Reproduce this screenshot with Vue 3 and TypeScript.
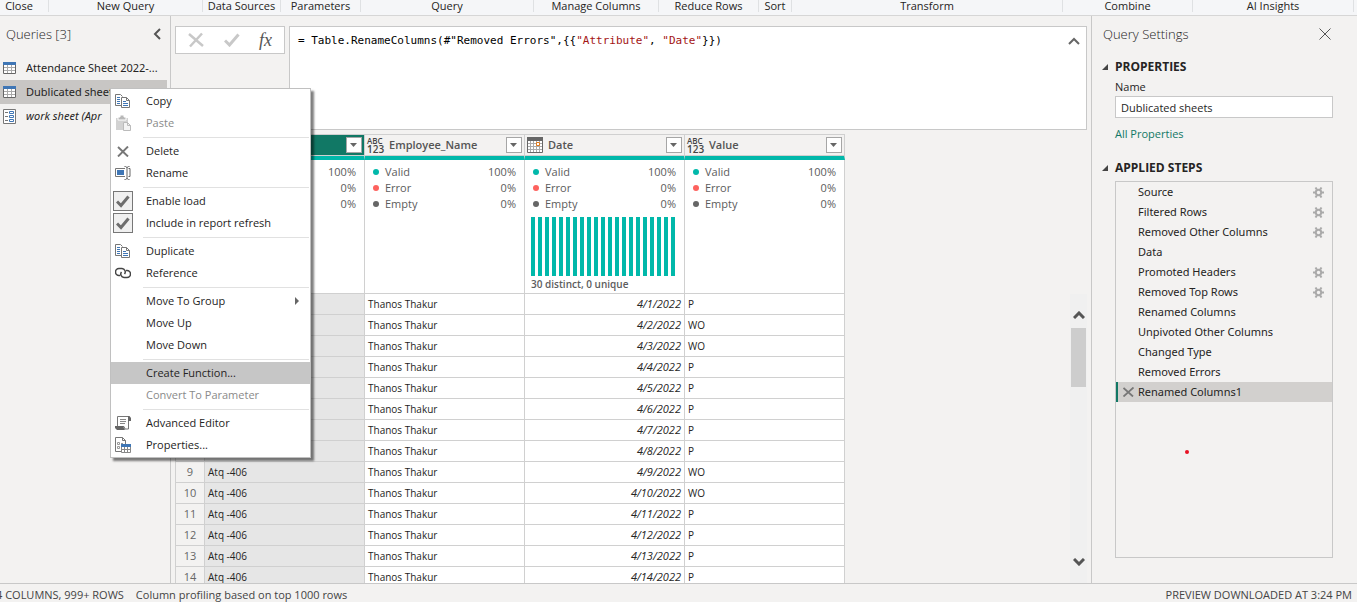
<script setup lang="ts">
import { ref } from 'vue'

interface MenuItem {
  label: string
  icon?: string
  disabled?: boolean
  active?: boolean
  submenu?: boolean
  check?: boolean
}

const ribbon = [
  'Close', 'New Query', 'Data Sources', 'Parameters', 'Query', 'Manage Columns',
  'Reduce Rows', 'Sort', 'Transform', 'Combine', 'AI Insights', '',
]

const queries = [
  { name: 'Attendance Sheet 2022-...', kind: 'table' },
  { name: 'Dublicated sheets', kind: 'table', selected: true },
  { name: 'work sheet (Apr', kind: 'list', italic: true },
]

const menu: MenuItem[][] = [
  [{ label: 'Copy', icon: 'copy' }, { label: 'Paste', icon: 'paste', disabled: true }],
  [{ label: 'Delete', icon: 'delete' }, { label: 'Rename', icon: 'rename' }],
  [{ label: 'Enable load', check: true }, { label: 'Include in report refresh', check: true }],
  [{ label: 'Duplicate', icon: 'copy' }, { label: 'Reference', icon: 'link' }],
  [{ label: 'Move To Group', submenu: true }, { label: 'Move Up' }, { label: 'Move Down' }],
  [{ label: 'Create Function...', active: true }, { label: 'Convert To Parameter', disabled: true }],
  [{ label: 'Advanced Editor', icon: 'script' }, { label: 'Properties...', icon: 'props' }],
]

const columns = [
  { name: 'Attribute', type: 'any', selected: true },
  { name: 'Employee_Name', type: 'any' },
  { name: 'Date', type: 'date', bars: 21 },
  { name: 'Value', type: 'any' },
]

const stats = [
  { name: 'Valid', value: '100%', tone: 'valid' },
  { name: 'Error', value: '0%', tone: 'error' },
  { name: 'Empty', value: '0%', tone: 'empty' },
]

const values = ['P', 'WO', 'WO', 'P', 'P', 'P', 'P', 'P', 'WO', 'WO', 'P', 'P', 'P', 'P']
const rows = values.map((value, i) => ({
  n: i + 1,
  id: 'Atq -406',
  employee: 'Thanos Thakur',
  date: `4/${i + 1}/2022`,
  value,
}))

const steps = [
  { name: 'Source', gear: true },
  { name: 'Filtered Rows', gear: true },
  { name: 'Removed Other Columns', gear: true },
  { name: 'Data' },
  { name: 'Promoted Headers', gear: true },
  { name: 'Removed Top Rows', gear: true },
  { name: 'Renamed Columns' },
  { name: 'Unpivoted Other Columns' },
  { name: 'Changed Type' },
  { name: 'Removed Errors' },
  { name: 'Renamed Columns1', selected: true },
]

const queryName = ref('Dublicated sheets')
</script>

<template>
  <div class="app">
    <header class="ribbon">
      <div v-for="(g, i) in ribbon" :key="i" class="group">{{ g }}</div>
    </header>

    <div class="body">
      <aside class="queries">
        <div class="pane-head">
          <h2>Queries [3]</h2>
          <button class="bare" aria-label="Collapse queries">
            <svg width="8" height="12" viewBox="0 0 8 12"><path d="M7 1 2 6l5 5" fill="none" stroke="#555" stroke-width="2" /></svg>
          </button>
        </div>
        <ul class="query-list">
          <li v-for="q in queries" :key="q.name">
            <button class="query" :class="{ selected: q.selected, italic: q.italic }">
              <svg v-if="q.kind === 'table'" width="13" height="12" viewBox="0 0 13 12">
                <path fill="#fff" d="M0 0h13v12H0z" />
                <path fill="#3f76b5" d="M0 0h13v3H0z" />
                <path d="M4.500 3v8M8.500 3v8M1 5.500h11M1 8.500h11" fill="none" stroke="#aaa" />
                <path d="M.5 3v8.500h12V3" fill="none" stroke="#666" />
              </svg>
              <svg v-else width="13" height="15" viewBox="0 0 13 15">
                <path d="M.5.5h12v14H.5z" fill="#fff" stroke="#777" />
                <path d="M2 3.500h3M2 7.500h3M2 11.500h3" stroke="#777" />
                <path d="M6.500 2.500h4v2h-4zM6.500 6.500h4v2h-4zM6.500 10.500h4v2h-4z" fill="none" stroke="#3f76b5" />
              </svg>
              <span>{{ q.name }}</span>
            </button>
          </li>
        </ul>
      </aside>

      <main class="center">
        <div class="formula-row">
          <div class="formula-tools">
            <button class="bare" aria-label="Cancel">
              <svg width="16" height="16" viewBox="0 0 16 16"><path d="M1 2 15 14M14 1.500 2 14.500" fill="none" stroke="#c8c8c8" stroke-width="2.500" /></svg>
            </button>
            <button class="bare" aria-label="Accept">
              <svg width="16" height="14" viewBox="0 0 16 14"><path d="M1 7.500 5.500 12 14.500 1.500" fill="none" stroke="#c8c8c8" stroke-width="3" /></svg>
            </button>
            <button class="bare fx" aria-label="Add step">fx</button>
          </div>
          <div class="formula">
            <code>= Table.RenameColumns(#"Removed Errors",{{ '{' }}{{ '{' }}<i>"Attribute"</i>, <i>"Date"</i>}})</code>
            <button class="bare" aria-label="Collapse formula bar">
              <svg width="12" height="8" viewBox="0 0 12 8"><path d="M1 7 6 2l5 5" fill="none" stroke="#666" stroke-width="2" /></svg>
            </button>
          </div>
        </div>

        <div class="grid-area">
          <div class="grid-clip">
            <table>
              <colgroup><col class="c-num" /><col v-for="c in columns" :key="c.name" /></colgroup>
              <thead>
                <tr class="names">
                  <th></th>
                  <th v-for="c in columns" :key="c.name" :class="{ picked: c.selected }">
                    <div class="th">
                      <span v-if="c.type === 'any'" class="any"><b>ABC</b><b class="digits">123</b></span>
                      <svg v-else width="16" height="16" viewBox="0 0 16 16">
                        <path fill="#fff" d="M0 0h16v16H0z" />
                        <path d="M3.500 4v11M6.500 4v11M9.500 4v11M12.500 4v11M1 6.500h14M1 9.500h14M1 12.500h14" stroke="#aaa" />
                        <path d="M.5.5h15v15H.5z" fill="none" stroke="#666" />
                        <path fill="#666" d="M0 0h16v4H0z" />
                        <path d="M9.500 5.500h3v3h-3z" fill="#fff" stroke="#e07b1f" />
                      </svg>
                      <span class="cname">{{ c.name }}</span>
                      <button class="drop" :aria-label="'Filter ' + c.name">
                        <svg width="8" height="4" viewBox="0 0 8 4"><path d="M0 0h7L3.500 4z" fill="#666" /></svg>
                      </button>
                    </div>
                  </th>
                </tr>
                <tr class="profile">
                  <td></td>
                  <td v-for="c in columns" :key="c.name">
                    <dl>
                      <div v-for="s in stats" :key="s.name">
                        <dt :class="s.tone">{{ s.name }}</dt><dd>{{ s.value }}</dd>
                      </div>
                    </dl>
                    <template v-if="c.bars">
                      <div class="bars"><i v-for="b in c.bars" :key="b"></i></div>
                      <div class="distinct">30 distinct, 0 unique</div>
                    </template>
                  </td>
                </tr>
              </thead>
              <tbody>
                <tr v-for="r in rows" :key="r.n">
                  <th scope="row">{{ r.n }}</th>
                  <td class="shade">{{ r.id }}</td>
                  <td>{{ r.employee }}</td>
                  <td class="date">{{ r.date }}</td>
                  <td>{{ r.value }}</td>
                </tr>
              </tbody>
            </table>
          </div>
          <div class="scroll">
            <button class="bare" aria-label="Scroll up">
              <svg width="12" height="8" viewBox="0 0 12 8"><path d="M1 7 6 2l5 5" fill="none" stroke="#555" stroke-width="3" /></svg>
            </button>
            <div class="thumb"></div>
            <button class="bare" aria-label="Scroll down">
              <svg width="12" height="8" viewBox="0 0 12 8"><path d="m1 1 5 5 5-5" fill="none" stroke="#555" stroke-width="3" /></svg>
            </button>
          </div>
        </div>
      </main>

      <aside class="settings">
        <div class="pane-head">
          <h2>Query Settings</h2>
          <button class="bare" aria-label="Close settings">
            <svg width="12" height="12" viewBox="0 0 12 12"><path d="M.5.5l11 11M11.500.5l-11 11" fill="none" stroke="#555" /></svg>
          </button>
        </div>
        <h3><svg width="6" height="6" viewBox="0 0 6 6"><path d="M6 0v6H0z" fill="#444" /></svg>PROPERTIES</h3>
        <label for="qname">Name</label>
        <input id="qname" v-model="queryName" type="text" />
        <a href="#">All Properties</a>
        <h3 class="applied"><svg width="6" height="6" viewBox="0 0 6 6"><path d="M6 0v6H0z" fill="#444" /></svg>APPLIED STEPS</h3>
        <ul class="steps">
          <li v-for="s in steps" :key="s.name" :class="{ selected: s.selected }">
            <button class="bare del" :aria-label="'Delete ' + s.name">
              <svg v-if="s.selected" width="11" height="10" viewBox="0 0 11 10"><path d="M.5 1 10 9.500M10.500.5.5 9.500" fill="none" stroke="#777" stroke-width="1.800" /></svg>
            </button>
            <button class="bare step">{{ s.name }}</button>
            <button v-if="s.gear" class="bare" :aria-label="'Edit ' + s.name">
              <svg width="11" height="11" viewBox="0 0 11 11">
                <circle cx="5.500" cy="5.500" r="2.700" fill="none" stroke="#aaa" stroke-width="2" />
                <path d="M0 5.500h2M9 5.500h2M2.500.5l1.300 2M8.500.5l-1.300 2M2.500 10.500l1.300-2M8.500 10.500l-1.300-2" stroke="#aaa" stroke-width="2" />
              </svg>
            </button>
          </li>
          <li class="marker" aria-hidden="true"></li>
        </ul>
      </aside>
    </div>

    <footer>
      <span class="count">4 COLUMNS, 999+ ROWS</span>
      <span>Column profiling based on top 1000 rows</span>
      <span class="preview">PREVIEW DOWNLOADED AT 3:24 PM</span>
    </footer>

    <div class="menu" role="menu">
      <div v-for="(section, si) in menu" :key="si" class="section">
        <template v-for="m in section" :key="m.label">
          <label v-if="m.check" class="item">
            <span class="ico check">
              <input type="checkbox" checked />
              <svg width="14" height="13" viewBox="0 0 14 13"><path d="M1 6.500 5 10.500 12.500 1.500" fill="none" stroke="#6e6e6e" stroke-width="3" /></svg>
            </span>
            <span>{{ m.label }}</span>
          </label>
          <button v-else class="item" role="menuitem" :disabled="m.disabled" :class="{ active: m.active }">
            <span class="ico">
              <svg v-if="m.icon === 'copy'" width="16" height="15" viewBox="0 0 16 15">
                <path d="M6 11.500H.5V.5h5l2 2" fill="#fff" stroke="#777" />
                <path d="M2 3.500h3M2 5.500h3M2 7.500h3M2 9.500h3" stroke="#3f76b5" />
                <path d="M6.500 3.500h5l3 3v7h-8z" fill="#fff" stroke="#777" />
                <path d="M11.500 3.500v3h3" fill="none" stroke="#777" />
                <path d="M8 7.500h3M8 9.500h5M8 11.500h5" stroke="#3f76b5" />
              </svg>
              <svg v-else-if="m.icon === 'paste'" width="16" height="16" viewBox="0 0 16 16">
                <path d="M1 3h12v12H1z" fill="#d2d2d2" />
                <path d="M3 2h2V0h4v2h2v3H3z" fill="#b8b8b8" stroke="#fff" />
                <path d="M8.500 7.500h4l3 3v5h-7z" fill="#f4f4f4" stroke="#bbb" />
                <path d="M12.500 7.500v3h3" fill="none" stroke="#bbb" />
              </svg>
              <svg v-else-if="m.icon === 'delete'" width="12" height="11" viewBox="0 0 12 11">
                <path d="M1 1 11 10.500M11 .5 1 10.500" fill="none" stroke="#777" stroke-width="1.900" />
              </svg>
              <svg v-else-if="m.icon === 'rename'" width="16" height="14" viewBox="0 0 16 14">
                <path d="M10 2.500H.5v8H10" fill="none" stroke="#777" />
                <path d="M2 4h7v5H2z" fill="#3f76b5" />
                <path d="M9.500.5h1l1.500 1 1.500-1h1M9.500 13.500h1l1.500-1 1.500 1h1M12 1v12M13.500 2.500h1.500v8h-1.500" fill="none" stroke="#666" />
              </svg>
              <svg v-else-if="m.icon === 'link'" width="16" height="12" viewBox="0 0 16 12">
                <path d="M5 8.500H4a3.400 3.400 0 0 1 0-7h3a3.400 3.400 0 0 1 2.500 5.500" fill="none" stroke="#444" stroke-width="1.500" />
                <path d="M11 3.500h1a3.400 3.400 0 0 1 0 7H9a3.400 3.400 0 0 1-2.500-5.500" fill="none" stroke="#444" stroke-width="1.500" />
              </svg>
              <svg v-else-if="m.icon === 'script'" width="16" height="14" viewBox="0 0 16 14">
                <path d="M2.500 10V.5h11V12" fill="#fff" stroke="#777" />
                <path d="M13 0h1.500L16 2v3h-3z" fill="#666" />
                <path d="M5 3.500h6M5 5.500h6M5 7.500h5" stroke="#888" />
                <path d="M0 10.500h9l1 2.500h3.500V12" fill="none" stroke="#777" />
                <path d="M0 10h8l2 4H2l-2-2z" fill="#666" />
              </svg>
              <svg v-else-if="m.icon === 'props'" width="16" height="16" viewBox="0 0 16 16">
                <path d="M6 14.500H.5V.5h7l3 3V7" fill="#fff" stroke="#777" />
                <path d="M7.500.5v3h3" fill="none" stroke="#777" />
                <path d="M2.500 5.500h2v2h-2zM2.500 9.500h2v2h-2zM6 6.500h2" fill="none" stroke="#999" />
                <path d="M6 7h10v9H6z" fill="#fff" />
                <path d="M6.500 10v5.500h9V10M9.500 10v5M12.500 10v5M7 12.500h8" fill="none" stroke="#888" />
                <path d="M6 7h10v3H6z" fill="#3f76b5" />
              </svg>
            </span>
            <span>{{ m.label }}</span>
            <svg v-if="m.submenu" class="arrow" width="4" height="8" viewBox="0 0 4 8"><path d="M0 0v8l4-4z" fill="#666" /></svg>
          </button>
        </template>
      </div>
    </div>
  </div>
</template>

<style>
html,
body {
  background: #f3f2f1;
}
</style>

<style scoped>
* {
  box-sizing: border-box;
}
.app {
  position: relative;
  display: flex;
  flex-direction: column;
  height: 100vh;
  overflow: hidden;
  background: #f3f2f1;
  color: #252423;
  font-family: "Open Sans", "Noto Sans", sans-serif;
  font-size: 11px;
  line-height: 16px;
}
button,
input {
  font: inherit;
  color: inherit;
}
svg {
  display: block;
  flex: none;
}
ul {
  list-style: none;
  margin: 0;
  padding: 0;
}
h2,
h3 {
  margin: 0;
}
.bare {
  display: block;
  border: 0;
  padding: 0;
  background: none;
}
.ribbon {
  display: grid;
  grid-template-columns: 49fr 154fr 78fr 80fr 173fr 125fr 100fr 33fr 271fr 130fr 161fr 3fr;
  flex: none;
  height: 16px;
  background: #f5f6f8;
  border-bottom: 1px solid #d6d6d6;
}
.group {
  display: flex;
  justify-content: center;
  align-items: center;
  height: 12px;
  border-right: 1px solid #dfe1e3;
  line-height: 12px;
  white-space: nowrap;
}
.group:first-child {
  padding-right: 10px;
}
.group:last-child {
  border: 0;
}
.body {
  flex: 1;
  display: flex;
  min-height: 0;
}
.pane-head {
  display: flex;
  justify-content: space-between;
  align-items: center;
  height: 36px;
}
.pane-head h2 {
  font-size: 13px;
  font-weight: 300;
}
.queries {
  flex: none;
  width: 171px;
  border-right: 1px solid #c8c8c8;
  padding-right: 3px;
}
.queries .pane-head {
  padding: 0 6px;
}
.query-list {
  padding-top: 4px;
}
.query {
  display: flex;
  align-items: center;
  gap: 10px;
  width: 100%;
  height: 24px;
  padding: 0 3px;
  border: 0;
  background: none;
  font-family: "Noto Sans", sans-serif;
  white-space: nowrap;
  overflow: hidden;
}
.query.selected {
  background: #c8c6c4;
}
.query.italic {
  font-style: italic;
}
.center {
  flex: 1;
  display: flex;
  flex-direction: column;
  min-width: 0;
  padding: 10px 4px 0;
}
.formula-row {
  display: flex;
  align-items: flex-start;
  gap: 4px;
  height: 104px;
}
.formula-tools {
  display: flex;
  align-items: center;
  justify-content: space-between;
  width: 110px;
  height: 28px;
  padding: 0 12px;
  border: 1px solid #c8c8c8;
  background: #fff;
}
.fx {
  font-family: "Liberation Serif", serif;
  font-style: italic;
  font-size: 18px;
  color: #555;
}
.formula {
  flex: 1;
  display: flex;
  justify-content: space-between;
  align-items: flex-start;
  height: 100%;
  padding: 6px 6px 0 8px;
  border: 1px solid #c8c8c8;
  background: #fff;
}
.formula code {
  font-family: "DejaVu Sans Mono", monospace;
  font-size: 11px;
  color: #000;
}
.formula i {
  font-style: normal;
  color: #a31515;
}
.formula .bare {
  padding-top: 4px;
}
.grid-area {
  flex: 1;
  display: flex;
  justify-content: space-between;
  min-height: 0;
  padding-top: 4px;
}
.grid-clip {
  overflow: hidden;
}
table {
  table-layout: fixed;
  width: 670px;
  border-collapse: separate;
  border-spacing: 0;
  border-left: 1px solid #d0d0d0;
  border-top: 1px solid #d0d0d0;
}
.c-num {
  width: 29px;
}
th,
td {
  padding: 0;
  border-right: 1px solid #d0d0d0;
  border-bottom: 1px solid #d0d0d0;
  text-align: left;
  overflow: hidden;
}
.names th {
  height: 25px;
  border-bottom: 4px solid #01b8aa;
  background: #f3f2f1;
  color: #555;
  font-weight: 600;
}
.names th:first-child {
  border-bottom-color: #f3f2f1;
}
.names th.picked {
  background: #117865;
  color: #fff;
}
.th {
  display: flex;
  align-items: center;
  gap: 5px;
  height: 21px;
  padding: 0 2px;
  border-bottom: 1px solid #d0d0d0;
}
.any b {
  display: block;
  width: 17px;
  font-size: 8px;
  font-weight: 600;
  line-height: 8px;
  color: #444;
}
.any .digits {
  font-size: 10px;
}
.cname {
  flex: 1;
}
.drop {
  display: grid;
  place-items: center;
  width: 16px;
  height: 16px;
  padding: 0;
  border: 1px solid #a6a6a6;
  background: #fff;
}
.profile td {
  height: 133px;
  padding: 4px 8px 0;
  vertical-align: top;
  background: #fff;
  color: #5c5c5c;
}
dl {
  margin: 0;
}
dl div {
  display: flex;
  justify-content: space-between;
}
dt {
  display: flex;
  align-items: center;
  gap: 6px;
}
dt::before {
  content: "";
  width: 6px;
  height: 6px;
  border-radius: 50%;
  background: #666;
}
.valid::before {
  background: #01b8aa;
}
.error::before {
  background: #fd625e;
}
dd {
  margin: 0;
}
.bars {
  display: flex;
  gap: 3px;
  height: 59px;
  margin: 5px -2px 0;
}
.bars i {
  width: 4px;
  background: #01b8aa;
}
.distinct {
  margin: 0 -2px;
  line-height: 17px;
  font-size: 10px;
  font-weight: 600;
}
tbody td,
tbody th {
  height: 21px;
  padding: 0 3px;
  font-size: 10px;
  font-weight: 400;
  background: #fff;
}
tbody th {
  text-align: center;
  font-size: 11px;
  background: #f3f2f1;
  color: #666;
}
tbody td.shade {
  background: #e6e6e6;
}
tbody td.date {
  text-align: right;
  font-size: 11px;
  font-style: italic;
}
.scroll {
  display: flex;
  flex-direction: column;
  align-items: center;
  width: 17px;
  margin-top: 160px;
  background: #f0f0f0;
}
.scroll .bare {
  display: grid;
  place-items: center;
  height: 34px;
  padding-top: 8px;
}
.scroll .bare:last-child {
  padding: 0 0 8px;
}
.thumb {
  width: 15px;
  height: 59px;
  margin-bottom: auto;
  background: #cdcdcd;
}
.settings {
  flex: none;
  width: 266px;
  border-left: 1px solid #c8c8c8;
  padding: 0 24px 25px 23px;
  display: flex;
  flex-direction: column;
}
.settings .pane-head {
  margin: 0 2px 0 -12px;
}
.settings h3 {
  display: flex;
  align-items: center;
  gap: 7px;
  margin: 7px 0 4px -13px;
  font-size: 12px;
  line-height: 16px;
  font-weight: 700;
}
.settings input {
  width: 100%;
  height: 22px;
  margin: 1px 0 8px;
  padding: 0 5px;
  border: 1px solid #c8c8c8;
  background: #fff;
  font-size: 11px;
}
.settings a {
  color: #117865;
  text-decoration: none;
}
.settings h3.applied {
  margin: 18px 0 5px -13px;
}
.steps {
  position: relative;
  flex: 1;
  border: 1px solid #c8c8c8;
  font-family: "Noto Sans", sans-serif;
}
.steps li {
  display: flex;
  align-items: center;
  height: 20px;
  padding-right: 8px;
}
.steps li.selected {
  background: #d2d0ce;
  border-left: 2px solid #117865;
}
.del {
  width: 22px;
  padding-left: 7px;
}
.selected .del {
  width: 20px;
  padding-left: 5px;
}
.step {
  flex: 1;
  text-align: left;
}
.steps .marker {
  position: absolute;
  left: 69px;
  top: 268px;
  width: 4px;
  height: 4px;
  padding: 0;
  border-radius: 50%;
  background: #e81123;
}
footer {
  flex: none;
  display: flex;
  align-items: center;
  gap: 12px;
  height: 19px;
  padding: 3px 5px 0 0;
  border-top: 1px solid #c8c8c8;
  color: #444;
}
.count {
  margin-left: -4px;
}
.preview {
  margin-left: auto;
}
.menu {
  position: absolute;
  left: 110px;
  top: 88px;
  width: 201px;
  padding: 1px 0;
  border: 1px solid #c0c0c0;
  background: #fff;
  box-shadow: 3px 3px 2px rgba(0, 0, 0, 0.5);
}
.section + .section::before {
  content: "";
  display: block;
  height: 1px;
  margin: 3px 1px 2px 32px;
  background: #e1e1e1;
}
.item {
  display: flex;
  align-items: center;
  width: 100%;
  height: 22px;
  padding: 0 11px 0 2px;
  border: 0;
  background: none;
  text-align: left;
}
.item.active {
  background: #c6c6c6;
}
.item:disabled {
  color: #8a8a8a;
}
.ico {
  display: grid;
  place-items: center;
  width: 20px;
  height: 20px;
  margin-right: 13px;
}
.check input {
  grid-area: 1 / 1;
  appearance: none;
  width: 20px;
  height: 20px;
  margin: 0;
  border: 1px solid #777;
  background: #f0f0f0;
}
.check svg {
  grid-area: 1 / 1;
  z-index: 1;
}
.arrow {
  margin-left: auto;
}
</style>
